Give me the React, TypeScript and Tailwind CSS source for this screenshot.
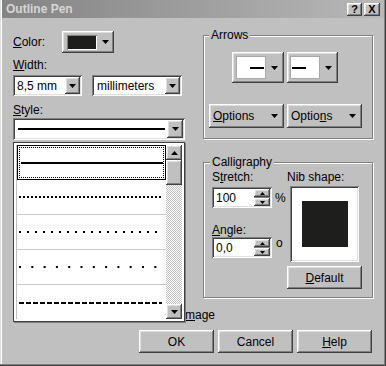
import React from "react";

const RAISED =
  "bg-[#c0c0c0] shadow-[inset_-1px_-1px_#404040,inset_1px_1px_#ffffff,inset_-2px_-2px_#808080,inset_2px_2px_#dfdfdf]";
const SUNKEN =
  "shadow-[inset_1px_1px_#808080,inset_-1px_-1px_#ffffff,inset_2px_2px_#404040,inset_-2px_-2px_#dfdfdf]";

function Down({ w = 7, h = 4 }: { w?: number; h?: number }) {
  return (
    <svg width={w} height={h} viewBox="0 0 7 4" className="block">
      <path d="M0 0h7L3.5 4z" fill="black" />
    </svg>
  );
}
function Up({ w = 7, h = 4 }: { w?: number; h?: number }) {
  return (
    <svg width={w} height={h} viewBox="0 0 7 4" className="block">
      <path d="M0 4h7L3.5 0z" fill="black" />
    </svg>
  );
}

function Line({ dash, width = 2 }: { dash?: string; width?: number }) {
  return (
    <svg width="143" height="4" className="block">
      <line
        x1="0"
        y1="2"
        x2="143"
        y2="2"
        stroke="black"
        strokeWidth={width}
        strokeDasharray={dash}
      />
    </svg>
  );
}

function Spin({ value }: { value: string }) {
  return (
    <div
      className={`w-[60px] h-[21px] bg-white ${SUNKEN} flex items-center justify-between pl-[4px] pr-[2px]`}
    >
      <span>{value}</span>
      <div className="flex flex-col w-[16px]">
        <div className={`${RAISED} h-[8px] flex items-center justify-center`}>
          <Up w={5} h={3} />
        </div>
        <div className="h-[1px] bg-[#808080]" />
        <div className={`${RAISED} h-[8px] flex items-center justify-center`}>
          <Down w={5} h={3} />
        </div>
      </div>
    </div>
  );
}

export default function App() {
  return (
    <div className="relative w-[386px] h-[366px] overflow-hidden bg-[#c0c0c0] text-[12px] leading-[14px] text-black font-['Liberation_Sans_Narrow','Liberation_Sans',Arial,sans-serif] shadow-[inset_-1px_-1px_#404040,inset_-2px_-2px_#808080,inset_1px_0_#dfdfdf,inset_2px_0_#ffffff]">
      {/* Title bar */}
      <div className="mx-[2px] h-[18px] flex items-center justify-between pl-[4px] pr-[4px] bg-gradient-to-r from-[#848484] to-[#b8b8b8]">
        <span className="font-['Liberation_Sans',Arial,sans-serif] font-bold text-[12px] text-[#d6d6d6]">
          Outline Pen
        </span>
        <div className="flex gap-[2px]">
          <div
            className={`${RAISED} w-[15px] h-[13px] flex items-center justify-center font-['Liberation_Sans',Arial,sans-serif] font-bold text-[11px] leading-none`}
          >
            ?
          </div>
          <div
            className={`${RAISED} w-[16px] h-[13px] flex items-center justify-center font-['Liberation_Sans',Arial,sans-serif] font-bold text-[11px] leading-none`}
          >
            X
          </div>
        </div>
      </div>

      {/* Body */}
      <div className="flex">
        {/* Left column */}
        <div className="ml-[13px] w-[172px] shrink-0 flex flex-col">
          <div className="mt-[13px] h-[22px] flex items-center">
            <span className="w-[49px]">
              <u>C</u>olor:
            </span>
            <div
              className={`${RAISED} w-[52px] h-[22px] flex items-center pl-[5px]`}
            >
              <div
                className={`w-[30px] h-[15px] bg-[#1e1e1c] shadow-[inset_1px_1px_#808080,inset_-1px_-1px_#ffffff]`}
              />
              <div className="ml-[5px]">
                <Down />
              </div>
            </div>
          </div>

          <div className="mt-[5px] h-[14px]">
            <u>W</u>idth:
          </div>
          <div className="mt-[3px] flex gap-[10px]">
            <div
              className={`w-[69px] h-[21px] bg-white ${SUNKEN} flex items-center justify-between pl-[4px] pr-[2px]`}
            >
              <span>8,5 mm</span>
              <div
                className={`${RAISED} w-[15px] h-[17px] flex items-center justify-center`}
              >
                <Down />
              </div>
            </div>
            <div
              className={`w-[90px] h-[21px] bg-white ${SUNKEN} flex items-center justify-between pl-[5px] pr-[2px]`}
            >
              <span>millimeters</span>
              <div
                className={`${RAISED} w-[15px] h-[17px] flex items-center justify-center`}
              >
                <Down />
              </div>
            </div>
          </div>

          <div className="mt-[7px] h-[14px]">
            <u>S</u>tyle:
          </div>
          <div
            className={`mt-[1px] w-[172px] h-[22px] bg-white ${SUNKEN} flex items-center justify-between pl-[5px] pr-[2px]`}
          >
            <div className="w-[147px] h-[2px] bg-black" />
            <div
              className={`${RAISED} w-[16px] h-[18px] flex items-center justify-center`}
            >
              <Down />
            </div>
          </div>

          <div className="mt-[168px] h-[14px] flex whitespace-nowrap">
            <span className="w-[172px] shrink-0 flex justify-end">
              Scale with i
            </span>
            <span>
              <u>m</u>age
            </span>
          </div>
        </div>

        {/* Right column */}
        <div className="ml-[18px] w-[170px] shrink-0 flex flex-col">
          <fieldset className="mt-[10px] h-[111px] min-w-0 border border-[#808080] shadow-[1px_1px_0_#ffffff,inset_1px_1px_0_#ffffff]">
            <legend className="ml-[5px] px-[2px] h-[14px] bg-[#c0c0c0]">
              Arrows
            </legend>
            <div className="mt-[10px] ml-[28px] flex gap-[3px]">
              <div className={`${RAISED} w-[52px] h-[31px] flex items-center pl-[4px]`}>
                <div className="w-[30px] h-[23px] bg-white border border-[#a8a8a8] flex items-center justify-end pr-[1px]">
                  <div className="w-[14px] h-[2px] bg-black" />
                </div>
                <div className="ml-[5px]">
                  <Down />
                </div>
              </div>
              <div className={`${RAISED} w-[51px] h-[31px] flex items-center pl-[3px]`}>
                <div className="w-[30px] h-[23px] bg-white border border-[#a8a8a8] flex items-center justify-start pl-[1px]">
                  <div className="w-[14px] h-[2px] bg-black" />
                </div>
                <div className="ml-[5px]">
                  <Down />
                </div>
              </div>
            </div>
            <div className="mt-[21px] ml-[5px] flex gap-[3px]">
              <div
                className={`${RAISED} w-[75px] h-[24px] flex items-center justify-between pl-[4px] pr-[6px]`}
              >
                <span>
                  <u>O</u>ptions
                </span>
                <Down />
              </div>
              <div
                className={`${RAISED} w-[75px] h-[24px] flex items-center justify-between pl-[4px] pr-[6px]`}
              >
                <span>
                  Optio<u>n</u>s
                </span>
                <Down />
              </div>
            </div>
          </fieldset>

          <fieldset className="mt-[16px] h-[143px] min-w-0 border border-[#808080] shadow-[1px_1px_0_#ffffff,inset_1px_1px_0_#ffffff]">
            <legend className="ml-[6px] px-[2px] h-[14px] bg-[#c0c0c0]">
              Calligraphy
            </legend>
            <div className="mt-[1px] ml-[8px] flex">
              <div className="w-[75px] shrink-0 flex flex-col">
                <div className="h-[14px]">
                  S<u>t</u>retch:
                </div>
                <div className="mt-[3px] flex items-center">
                  <Spin value="100" />
                  <span className="ml-[3px]">%</span>
                </div>
                <div className="mt-[15px] h-[14px]">
                  <u>A</u>ngle:
                </div>
                <div className="flex items-start">
                  <Spin value="0,0" />
                  <span className="ml-[4px] -mt-[1px]">o</span>
                </div>
              </div>
              <div className="flex flex-col">
                <div className="h-[14px]">Nib shape:</div>
                <div
                  className={`mt-[2px] ml-[3px] w-[69px] h-[76px] bg-white ${SUNKEN} flex items-center justify-center`}
                >
                  <div className="w-[46px] h-[46px] bg-[#1e1e1c]" />
                </div>
                <div
                  className={`${RAISED} mt-[4px] w-[75px] h-[23px] flex items-center justify-center`}
                >
                  <span>
                    <u>D</u>efault
                  </span>
                </div>
              </div>
            </div>
          </fieldset>
        </div>
      </div>

      {/* Bottom buttons */}
      <div className="mt-[8px] ml-[139px] flex gap-[4px]">
        <div className={`${RAISED} w-[75px] h-[23px] flex items-center justify-center`}>
          OK
        </div>
        <div className={`${RAISED} w-[75px] h-[23px] flex items-center justify-center`}>
          Cancel
        </div>
        <div className={`${RAISED} w-[75px] h-[23px] flex items-center justify-center`}>
          <span>
            <u>H</u>elp
          </span>
        </div>
      </div>

      {/* Dropdown list popup over the form */}
      <div className="absolute left-[13px] top-[142px] w-[172px] h-[180px] border border-[#404040] bg-white p-[2px] flex shadow-[1px_1px_0_#808080]">
        <div className="w-[150px] h-full overflow-hidden flex flex-col border-l border-[#c0c0c0]">
          <div className="h-[35px] shrink-0 border border-black p-[1px]">
            <div className="h-full border border-dotted border-black flex items-center pl-[1px]">
              <Line />
            </div>
          </div>
          <div className="h-[35px] shrink-0 border-b border-[#c8c8c8] flex items-center pl-[2px]">
            <Line dash="2 2" />
          </div>
          <div className="h-[35px] shrink-0 border-b border-[#c8c8c8] flex items-center pl-[2px]">
            <Line dash="2 6" />
          </div>
          <div className="h-[35px] shrink-0 border-b border-[#c8c8c8] flex items-center pl-[2px]">
            <Line dash="2 10.3" />
          </div>
          <div className="h-[35px] shrink-0 flex items-center pl-[2px]">
            <Line dash="5 2" />
          </div>
        </div>
        <div className="w-[16px] h-full flex flex-col">
          <div className={`${RAISED} h-[15px] shrink-0 flex items-center justify-center`}>
            <Up />
          </div>
          <div className={`${RAISED} h-[25px] shrink-0`} />
          <div className="flex-1 bg-[repeating-conic-gradient(#c0c0c0_0%_25%,#ffffff_0%_50%)] bg-[length:2px_2px]" />
          <div className={`${RAISED} h-[15px] shrink-0 flex items-center justify-center`}>
            <Down />
          </div>
        </div>
      </div>
    </div>
  );
}
